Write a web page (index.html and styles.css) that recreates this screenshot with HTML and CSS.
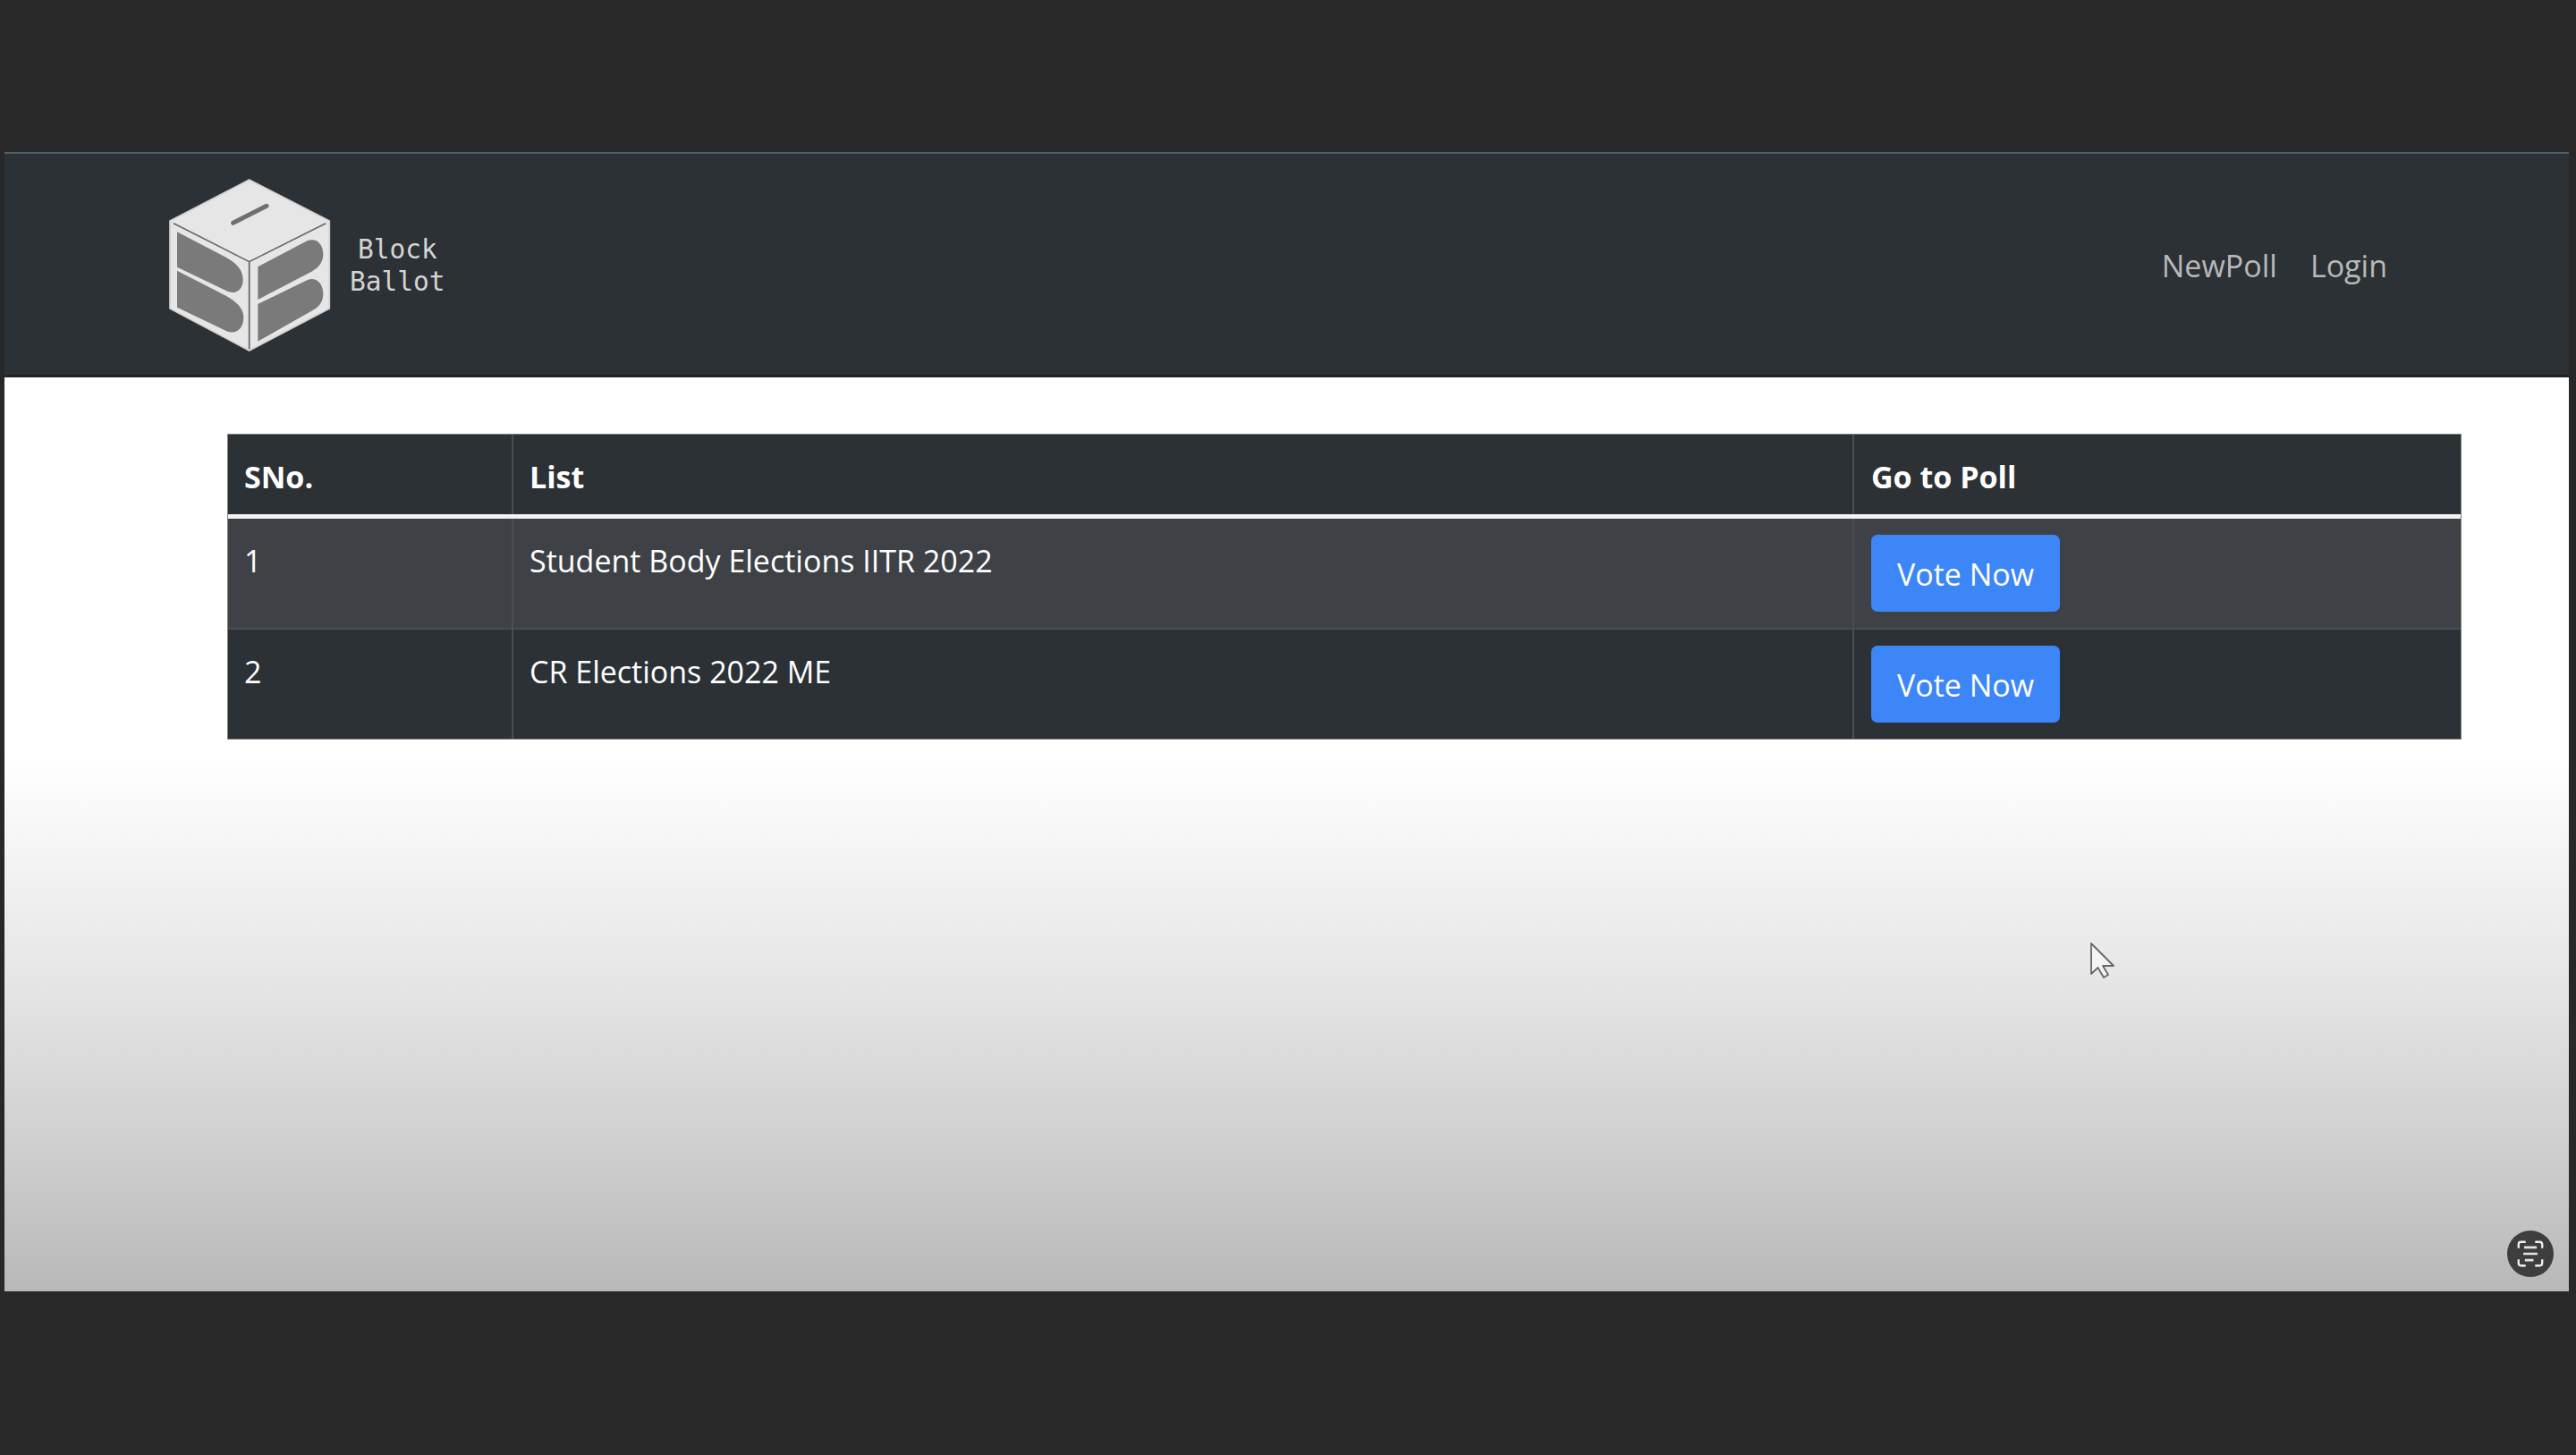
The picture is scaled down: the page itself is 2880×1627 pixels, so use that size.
FILE: index.html
```html
<!DOCTYPE html>
<html lang="en">
<head>
<meta charset="utf-8">
<title>Block Ballot</title>
<link rel="stylesheet" href="styles.css">
</head>
<body>
<div class="frame">
  <nav class="navbar">
    <a class="brand" href="#">
      <svg class="logo" viewBox="0 0 630 630" aria-hidden="true">
        <polygon points="326,30 595,168 595,462 326,603 60,462 60,168" fill="#e6e6e6" stroke="#d2d2d2" stroke-width="5"/>
        <polyline points="72,176 326,305 583,176" fill="none" stroke="#66686a" stroke-width="5"/>
        <line x1="326" y1="305" x2="326" y2="598" stroke="#707274" stroke-width="6"/>
        <line x1="272" y1="175" x2="384" y2="118" stroke="#6f6f6f" stroke-width="15" stroke-linecap="round"/>
        <path d="M84,205 L245,289 C285,310 305,335 305,365 C305,395 285,418 250,403 L84,323 Z" fill="#7a7a7a"/>
        <path d="M84,335 L245,418 C285,440 307,462 307,492 C307,525 285,552 250,538 L84,458 Z" fill="#7a7a7a"/>
        <path d="M355,322 L520,235 C555,222 574,250 574,280 C574,305 560,325 535,338 L355,432 Z" fill="#7a7a7a"/>
        <path d="M355,447 L520,367 C555,352 574,385 574,412 C574,440 560,458 535,470 L355,572 Z" fill="#7a7a7a"/>
      </svg>
      <span class="brand-text">Block<br>Ballot</span>
    </a>
    <div class="nav-links">
      <a class="nav-link" href="#">NewPoll</a>
      <a class="nav-link" href="#">Login</a>
    </div>
  </nav>
  <main class="content">
    <table class="polls">
      <colgroup><col class="col-num"><col class="col-list"><col class="col-go"></colgroup>
      <thead>
        <tr><th>SNo.</th><th>List</th><th class="action">Go to Poll</th></tr>
      </thead>
      <tbody>
        <tr class="striped">
          <td>1</td>
          <td>Student Body Elections IITR 2022</td>
          <td class="action"><a class="btn" href="#">Vote Now</a></td>
        </tr>
        <tr>
          <td>2</td>
          <td>CR Elections 2022 ME</td>
          <td class="action"><a class="btn" href="#">Vote Now</a></td>
        </tr>
      </tbody>
    </table>
  </main>
  <svg class="cursor" viewBox="0 0 30 42" aria-hidden="true">
    <path d="M3,2 L3,36 L10.500,29 L17,40 L22,37 L16,27 L28,27 Z" fill="#f4f4f4" stroke="#666" stroke-width="1.800" stroke-linejoin="round"/>
  </svg>
  <div class="scan-badge">
    <svg class="scan-icon" viewBox="0 0 34 34" aria-hidden="true">
      <path d="M2,10 V5 Q2,2 5,2 H11 M23,2 H29 Q32,2 32,5 V10 M2,24 V29 Q2,32 5,32 H11 M23,32 H29 Q32,32 32,29 V24" fill="none" stroke="#f2f2f2" stroke-width="2.600"/>
      <path d="M9,9 H25 M8,17 H26 M10,25 H21" fill="none" stroke="#e4e4e4" stroke-width="3"/>
    </svg>
  </div>
</div>
</body>
</html>
```

FILE: styles.css
```css
* { box-sizing: border-box; }

html, body { margin: 0; height: 100%; }

body {
  background: #282828;
  padding: 170px 8px 0 5px;
  font-family: "Open Sans", "Noto Sans", sans-serif;
  overflow: hidden;
}

.frame {
  position: relative;
  height: 1274px;
  display: flex;
  flex-direction: column;
}

.navbar {
  height: 252px;
  flex: none;
  display: flex;
  align-items: center;
  justify-content: space-between;
  padding: 0 203px 0 165px;
  background: #2c3135;
  border-top: 2px solid #4d5f68;
  border-bottom: 3px solid #202427;
}

.brand {
  display: flex;
  align-items: center;
  gap: 11px;
  text-decoration: none;
}

.logo { width: 210px; height: 210px; display: block; filter: blur(0.7px); }

.brand-text {
  font-family: "DejaVu Sans Mono", "Liberation Mono", monospace;
  font-size: 29.500px;
  line-height: 36px;
  color: #d4d4d4;
  text-align: center;
  margin-top: 2px;
}

.nav-links { display: flex; gap: 37px; }

.nav-link {
  font-size: 34px;
  line-height: 46px;
  color: #b8b9ba;
  text-decoration: none;
  margin-top: 2px;
}

.content {
  flex: 1;
  padding: 64px 121px 0 250px;
  background: linear-gradient(to bottom, #fff 0, #fff 425px, #e6e6e6 670px, #cfcfcf 860px, #b8b8b8 1022px);
}

.polls {
  width: 2496px;
  table-layout: fixed;
  border-collapse: collapse;
  color: #fff;
  font-size: 34px;
  line-height: 46px;
  outline: 1px solid #7c7f82;
}

.col-num { width: 318px; }
.col-list { width: 1499px; }
.col-go { width: 679px; }

.polls th, .polls td {
  padding: 19px 18px;
  text-align: left;
  vertical-align: top;
  border-left: 2px solid #4a4e52;
  background: #2c3135;
}

.polls th:first-child, .polls td:first-child { border-left: 0; }

.polls th {
  height: 90px;
  font-weight: 700;
  padding-top: 24px;
  border-bottom: 5px solid #f2f2f2;
}

.polls td { height: 125px; padding-top: 24px; padding-bottom: 0; }

.polls .action { padding-left: 19px; }

.polls td.action { padding-top: 18px; }

.polls tbody tr + tr td {
  height: 123px;
  border-top: 2px solid #4a4e52;
}

.polls .striped td { background: #3e4246; }

.btn {
  display: block;
  width: 211px;
  height: 86px;
  background: #3d86f7;
  border-radius: 7px;
  color: #fff;
  font-size: 34px;
  line-height: 89px;
  text-align: center;
  text-decoration: none;
}

.cursor {
  position: absolute;
  left: 2330px;
  top: 883px;
  width: 30px;
  height: 42px;
}

.scan-badge {
  position: absolute;
  right: 17px;
  bottom: 16px;
  width: 52px;
  height: 52px;
  border-radius: 50%;
  background: #3e3e3e;
  display: flex;
  align-items: center;
  justify-content: center;
}

.scan-icon { width: 30px; height: 30px; }
```
